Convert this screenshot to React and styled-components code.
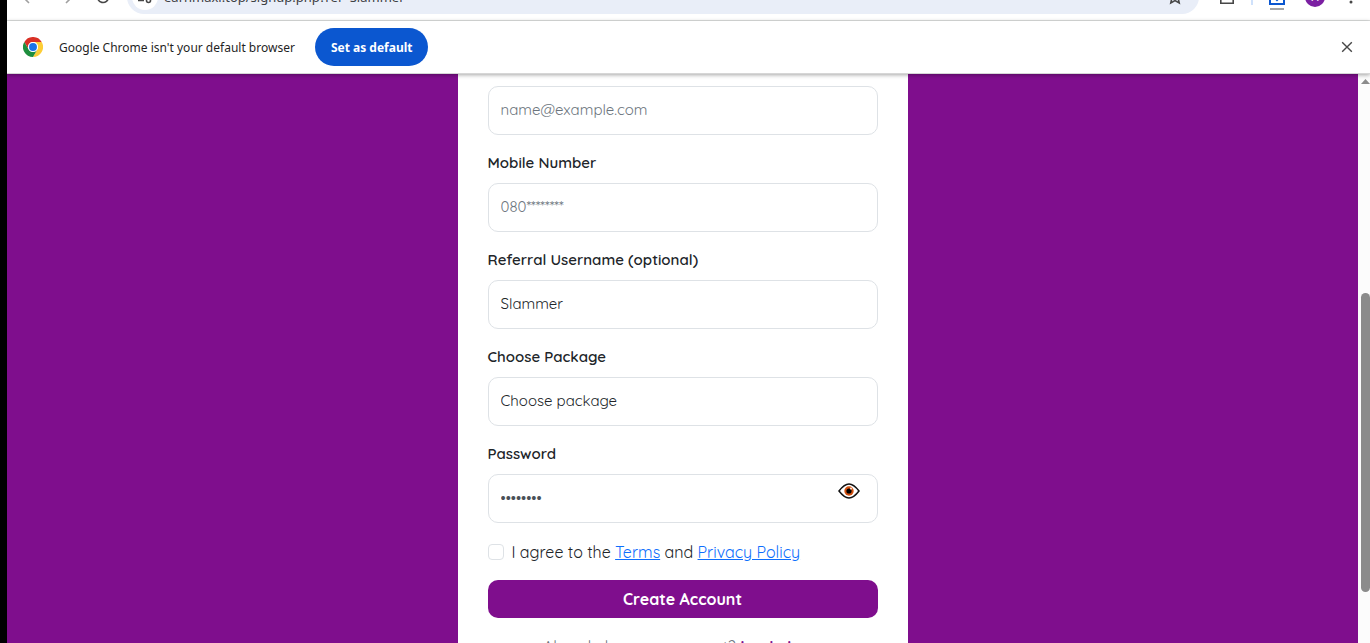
import { useState } from "react";
import styled, { createGlobalStyle } from "styled-components";

const purple = "#7f0e8d";

const GlobalStyle = createGlobalStyle`
  * {
    box-sizing: border-box;
  }
  body {
    margin: 0;
    background: #000;
  }
  button, input, select {
    font-family: inherit;
  }
`;

const Window = styled.div`
  display: flex;
  flex-direction: column;
  height: 100vh;
  margin-left: 7px;
  overflow: hidden;
  background: #fff;
  font-family: "Noto Sans", "Liberation Sans", sans-serif;
`;

const Toolbar = styled.header`
  display: flex;
  align-items: flex-end;
  height: 21px;
  flex-shrink: 0;
  padding: 0 5px 6px 8px;
  overflow: hidden;
  border-bottom: 1px solid #dfe1e0;
`;

const ToolRow = styled.div`
  display: flex;
  flex: 1;
  align-items: center;
  height: 34px;
`;

const IconButton = styled.button`
  display: flex;
  align-items: center;
  justify-content: center;
  width: ${(props) => props.$width || 28}px;
  height: 28px;
  flex-shrink: 0;
  padding: 0;
  border: 0;
  background: none;
  color: ${(props) => props.color || "#474747"};
`;

const NavGroup = styled.div`
  display: flex;
  gap: 9px;
`;

const AddressBar = styled.div`
  display: flex;
  flex: 1;
  align-items: center;
  height: 34px;
  margin: 0 12px 0 10px;
  padding: 0 10px 0 5px;
  border-radius: 17px;
  background: #e9eef8;
`;

const SiteInfo = styled(IconButton)`
  width: 26px;
  height: 26px;
  border-radius: 50%;
  background: #fff;
`;

const Address = styled.input`
  flex: 1;
  min-width: 0;
  padding: 0 6px;
  border: 0;
  outline: 0;
  background: none;
  color: #3c4043;
  font-size: 13px;
`;

const Divider = styled.span`
  width: 2px;
  height: 16px;
  margin: 0 4px;
  background: #cfe1fb;
`;

const Tool = styled.div`
  display: flex;
  align-items: center;
  gap: 4px;
`;

const Avatar = styled.button`
  width: 20px;
  height: 20px;
  margin: 0 8px;
  padding: 0;
  border: 0;
  border-radius: 50%;
  background: #7b1fa2;
  color: #fff;
  font-size: 11px;
  line-height: 20px;
`;

const InfoBar = styled.div`
  display: flex;
  align-items: center;
  position: relative;
  height: 53px;
  flex-shrink: 0;
  padding: 0 16px;
  border-bottom: 1px solid #d6d6d6;
  box-shadow: 0 1px 4px rgba(0, 0, 0, 0.35);
  color: #1f1f1f;
  font-size: 12px;
  p {
    margin: 0 20px 0 16px;
  }
`;

const DefaultButton = styled.button`
  height: 38px;
  padding: 0 16px;
  border: 0;
  border-radius: 19px;
  background: #0b57d0;
  color: #fff;
  font-size: 12px;
  font-weight: 700;
`;

const CloseButton = styled(IconButton)`
  width: 14px;
  margin-left: auto;
`;

const Body = styled.div`
  display: flex;
  flex: 1;
  min-height: 0;
`;

const Page = styled.main`
  display: flex;
  flex: 1;
  justify-content: center;
  overflow: hidden;
  background: ${purple};
  color: #212529;
  font-family: Quicksand, Lato, sans-serif;
  font-size: 16px;
`;

const Card = styled.form`
  width: 100%;
  max-width: 450px;
  height: max-content;
  padding: 12px 30px;
  background: #fff;
`;

const Field = styled.div`
  display: flex;
  flex-direction: column;
  position: relative;
  margin-bottom: 16px;
  label {
    padding-bottom: 8px;
    font-size: 15px;
    font-weight: 600;
    line-height: 24px;
  }
`;

const Input = styled.input`
  width: 100%;
  height: 49px;
  padding: 0 12px 2px;
  border: 1px solid #dee2e6;
  border-radius: 10px;
  outline: 0;
  background: #fff;
  color: #212529;
  font-size: 15px;
  font-weight: 400;
  &::placeholder {
    color: #6c757d;
    opacity: 1;
  }
`;

const PasswordInput = styled(Input)`
  &::placeholder {
    color: #495057;
  }
`;

const Select = styled(Input)`
  appearance: none;
`;

const EyeButton = styled.button`
  position: absolute;
  right: 18px;
  bottom: 24px;
  height: 16px;
  padding: 0;
  border: 0;
  background: none;
  svg {
    display: block;
  }
`;

const Agree = styled.div`
  display: flex;
  align-items: center;
  gap: 8px;
  margin: 17px 0 16px;
  line-height: 24px;
  input {
    width: 16px;
    height: 16px;
    margin: 0;
    appearance: none;
    border: 1px solid #dee2e6;
    border-radius: 4px;
    background: #fff;
  }
  input:checked {
    background: ${purple};
  }
  a {
    color: #0d6efd;
  }
`;

const Submit = styled.button`
  width: 100%;
  height: 38px;
  border: 0;
  border-radius: 10px;
  background: ${purple};
  color: #fff;
  font-size: 16px;
  font-weight: 700;
`;

const LoginHint = styled.p`
  margin: 17px 0 16px;
  color: #6c757d;
  line-height: 24px;
  text-align: center;
  a {
    color: ${purple};
    font-weight: 700;
    text-decoration: none;
  }
`;

const Scrollbar = styled.div`
  display: flex;
  flex-direction: column;
  align-items: flex-end;
  width: 12px;
  padding-top: 5px;
  background: #fcfcfc;
`;

const Track = styled.div`
  display: flex;
  flex: 1;
  flex-direction: column;
  width: 9px;
`;

const Gap = styled.span`
  flex: ${(props) => props.$size};
`;

const Thumb = styled(Gap)`
  border-radius: 5px;
  background: #8b8b8b;
`;

function ChromeLogo() {
  return (
    <svg width="20" height="20" viewBox="0 0 48 48" aria-hidden="true">
      <path d="M24 12h20.8A24 24 0 0 0 3.2 12L13.6 30A12 12 0 0 1 24 12Z" fill="#d93025" />
      <path d="M34.4 30 24 48A24 24 0 0 0 44.8 12H24A12 12 0 0 1 34.4 30Z" fill="#fdcd36" />
      <path d="M13.6 30 3.2 12A24 24 0 0 0 24 48L34.4 30A12 12 0 0 1 13.6 30Z" fill="#1e8e3e" />
      <circle cx="24" cy="24" r="12" fill="#fff" />
      <circle cx="24" cy="24" r="9.5" fill="#1a73e8" />
    </svg>
  );
}

function Icon({ children, size = 16 }) {
  return (
    <svg
      width={size}
      height={size}
      viewBox="0 0 16 16"
      fill="none"
      stroke="currentColor"
      strokeWidth="1.6"
      aria-hidden="true"
    >
      {children}
    </svg>
  );
}

function EyeIcon() {
  return (
    <svg width="22" height="16" viewBox="0 0 22 16" aria-hidden="true">
      <path d="M1 8C5 2.8 8 1 11 1s6 1.8 10 7c-4 5.2-7 7-10 7S5 13.2 1 8Z" fill="#fff" stroke="#111" strokeWidth="1.5" />
      <circle cx="11" cy="8" r="4.7" fill="#d2500f" />
      <circle cx="11" cy="8" r="2.6" fill="#000" />
      <circle cx="13" cy="5.6" r="1.1" fill="#f7dccb" />
    </svg>
  );
}

function BrowserToolbar() {
  return (
    <Toolbar>
      <ToolRow>
        <NavGroup>
          <IconButton aria-label="Back" color="#a0a0a0">
            <Icon><path d="M14 8H2M8 2 2 8l6 6" /></Icon>
          </IconButton>
          <IconButton aria-label="Forward" color="#a0a0a0">
            <Icon><path d="M2 8h12M8 2l6 6-6 6" /></Icon>
          </IconButton>
          <IconButton aria-label="Reload">
            <Icon><path d="M13.5 8A5.5 5.5 0 1 1 11.5 3.8L13.5 6M13.5 2v4h-4" /></Icon>
          </IconButton>
        </NavGroup>
        <AddressBar>
          <SiteInfo aria-label="Site information">
            <Icon>
              <path d="M1 11.5h6M9 4.5h6" />
              <circle cx="4.5" cy="4.5" r="2" />
              <circle cx="11.5" cy="11.5" r="2" />
            </Icon>
          </SiteInfo>
          <Address aria-label="Address" defaultValue="earnmaxi.top/signup.php?ref=Slammer" />
          <IconButton aria-label="Bookmark">
            <Icon><path d="m8 1.5 2 4.3 4.6.5-3.4 3.1 1 4.6L8 11.6 3.8 14l1-4.6L1.4 6.3 6 5.8Z" /></Icon>
          </IconButton>
        </AddressBar>
        <Tool>
          <IconButton aria-label="Extensions" $width={32}>
            <Icon><path d="M1.8 3h4a2 2 0 1 1 4 0h4.4v11.2H1.8V10a2 2 0 0 0 0-4Z" /></Icon>
          </IconButton>
          <Divider />
          <IconButton aria-label="Downloads" $width={32} color="#0b57d0">
            <svg width="16" height="26" viewBox="0 0 16 26" fill="none" aria-hidden="true">
              <path d="M1 7h14v13H1ZM8 6v10m-3-3 3 3 3-3" stroke="currentColor" strokeWidth="2" />
              <path d="M1 25h14" stroke="#a5a5a5" strokeWidth="2" />
            </svg>
          </IconButton>
          <Avatar aria-label="Profile">A</Avatar>
          <IconButton aria-label="Menu">
            <Icon>
              <g fill="currentColor" stroke="none">
                <circle cx="8" cy="3" r="1.5" />
                <circle cx="8" cy="8" r="1.5" />
                <circle cx="8" cy="13" r="1.5" />
              </g>
            </Icon>
          </IconButton>
        </Tool>
      </ToolRow>
    </Toolbar>
  );
}

function App() {
  const [showPassword, setShowPassword] = useState(false);

  return (
    <>
      <GlobalStyle />
      <Window>
        <BrowserToolbar />
        <InfoBar>
          <ChromeLogo />
          <p>Google Chrome isn't your default browser</p>
          <DefaultButton>Set as default</DefaultButton>
          <CloseButton aria-label="Close">
            <Icon size={14}><path d="m2.500 2.500 11 11M13.500 2.500l-11 11" /></Icon>
          </CloseButton>
        </InfoBar>
        <Body>
          <Page>
            <Card onSubmit={(e) => e.preventDefault()}>
              <Field>
                <Input type="email" aria-label="Email" placeholder="name@example.com" />
              </Field>
              <Field>
                <label htmlFor="mobile">Mobile Number</label>
                <Input id="mobile" type="tel" placeholder="080********" />
              </Field>
              <Field>
                <label htmlFor="referral">Referral Username (optional)</label>
                <Input id="referral" defaultValue="Slammer" />
              </Field>
              <Field>
                <label htmlFor="package">Choose Package</label>
                <Select as="select" id="package">
                  <option>Choose package</option>
                </Select>
              </Field>
              <Field>
                <label htmlFor="password">Password</label>
                <PasswordInput
                  id="password"
                  type={showPassword ? "text" : "password"}
                  placeholder="••••••••"
                />
                <EyeButton
                  type="button"
                  aria-label="Show password"
                  onClick={() => setShowPassword(!showPassword)}
                >
                  <EyeIcon />
                </EyeButton>
              </Field>
              <Agree>
                <input id="agree" type="checkbox" />
                <label htmlFor="agree">
                  I agree to the <a href="#terms">Terms</a> and{" "}
                  <a href="#privacy">Privacy Policy</a>
                </label>
              </Agree>
              <Submit>Create Account</Submit>
              <LoginHint>
                Already have an account? <a href="#login">Login here</a>
              </LoginHint>
            </Card>
          </Page>
          <Scrollbar>
            <svg width="9" height="5" viewBox="0 0 9 5" aria-hidden="true">
              <path d="M4.5 0 9 5H0Z" fill="#8b8b8b" />
            </svg>
            <Track>
              <Gap $size={209} />
              <Thumb $size={299} />
              <Gap $size={51} />
            </Track>
          </Scrollbar>
        </Body>
      </Window>
    </>
  );
}

export default App;
